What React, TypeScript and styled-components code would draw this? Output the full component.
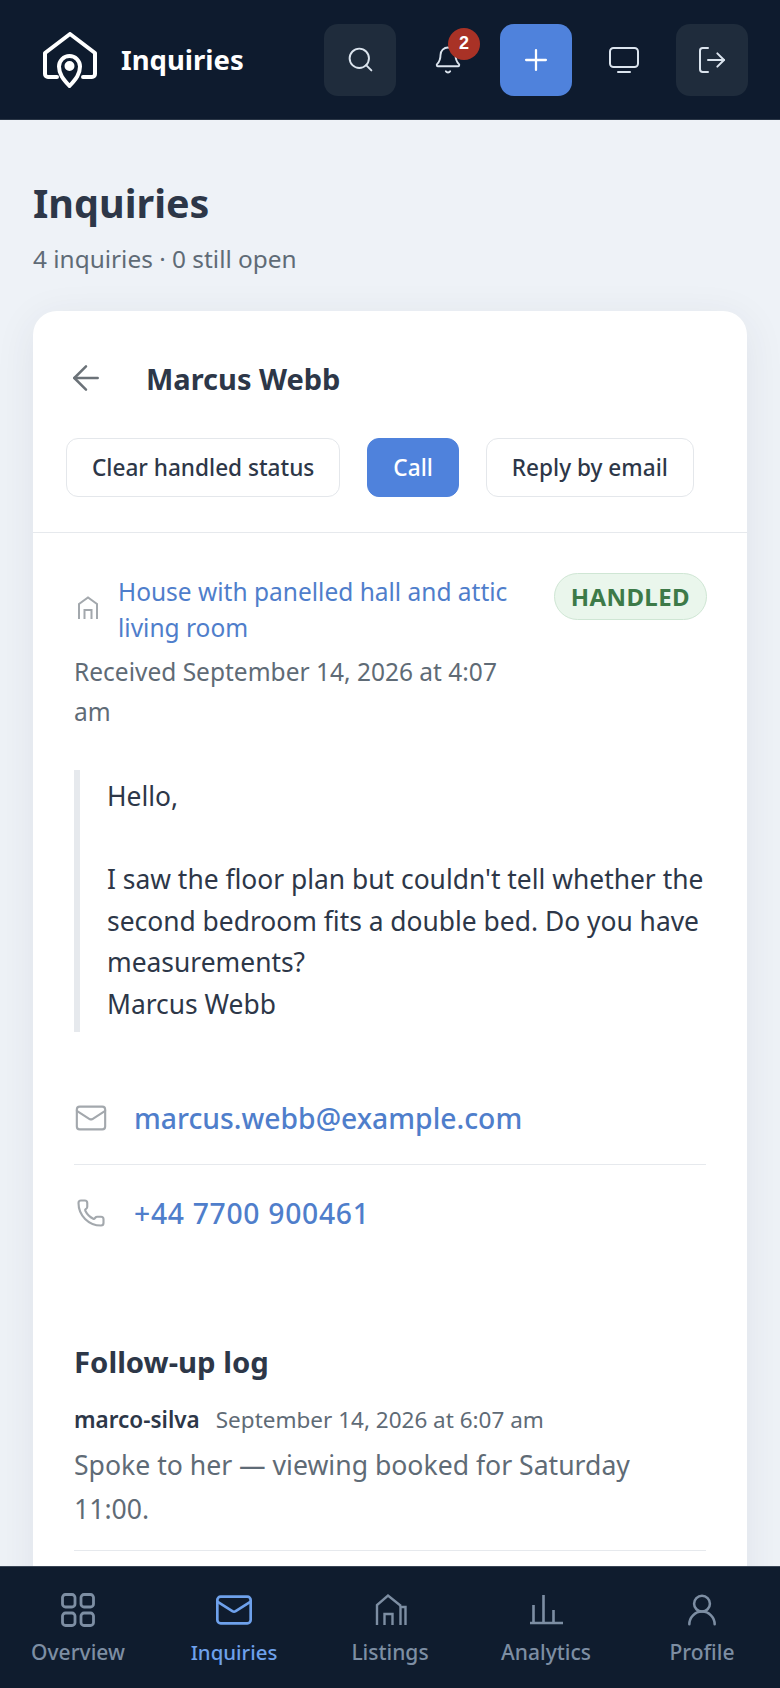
import React from "react";
import styled, { createGlobalStyle } from "styled-components";
import { ArrowLeft, Bell, LogOut, Mail, Phone, Plus, Search, UserRound } from "lucide-react";

const GlobalStyle = createGlobalStyle`
  * {
    box-sizing: border-box;
  }

  html,
  body {
    margin: 0;
    padding: 0;
    background: #eef2f7;
    font-family: "Noto Sans", "Open Sans", sans-serif;
  }
`;

const Screen = styled.div`
  display: flex;
  flex-direction: column;
  width: 780px;
  height: 1688px;
  overflow: hidden;
  background: #eef2f7;
`;

const Header = styled.header`
  display: flex;
  align-items: center;
  flex: 0 0 120px;
  padding: 0 32px 0 43px;
  background: #0e1b2e;
  border-bottom: 1px solid #2a3646;
`;

const Brand = styled.div`
  display: flex;
  align-items: center;
  gap: 24px;
  margin-right: auto;
  color: #ffffff;
  font-size: 27.5px;
  font-weight: 700;
`;

const Actions = styled.div`
  display: flex;
  gap: 16px;
`;

const IconButton = styled.button<{ $tone?: "muted" | "primary" | "plain" }>`
  position: relative;
  display: flex;
  align-items: center;
  justify-content: center;
  width: 72px;
  height: 72px;
  padding: 0;
  border: 0;
  border-radius: 14px;
  color: ${(props) => (props.$tone === "primary" ? "#ffffff" : "#dbe4ee")};
  background: ${(props) =>
    props.$tone === "primary" ? "#4f82dc" : props.$tone === "muted" ? "#1f2c3c" : "transparent"};
`;

const CountBadge = styled.span`
  position: absolute;
  top: 4px;
  right: 4px;
  display: flex;
  align-items: center;
  justify-content: center;
  width: 32px;
  height: 32px;
  border-radius: 50%;
  background: #a93226;
  color: #ffffff;
  font-size: 18px;
  font-weight: 700;
`;

const Main = styled.main`
  flex: 1;
  min-height: 0;
  overflow: hidden;
  padding: 56px 33px 0;
`;

const PageTitle = styled.h1`
  margin: 0;
  color: #2d3748;
  font-size: 39.5px;
  line-height: 54px;
  font-weight: 700;
`;

const PageSub = styled.p`
  margin: 12px 0 0;
  color: #5f6b76;
  font-size: 24.4px;
  line-height: 34px;
`;

const Card = styled.section`
  margin-top: 35px;
  background: #ffffff;
  border-radius: 24px;
  box-shadow: 0 8px 40px rgba(45, 55, 72, 0.08);
`;

const CardTop = styled.div`
  padding: 35px 33px 35px;
  border-bottom: 1px solid #e6e9ed;
`;

const TitleRow = styled.div`
  display: flex;
  align-items: center;
  gap: 40px;
  height: 64px;
  color: #6b7278;
`;

const Name = styled.h2`
  margin: 0;
  color: #2d3748;
  font-size: 29px;
  font-weight: 700;
`;

const ButtonRow = styled.div`
  display: flex;
  gap: 27px;
  margin-top: 28px;
`;

const ActionButton = styled.button<{ $primary?: boolean }>`
  height: 59px;
  padding: 0 25px;
  border: 1px solid ${(props) => (props.$primary ? "#4f82dc" : "#e4e7eb")};
  border-radius: 12px;
  background: ${(props) => (props.$primary ? "#4f82dc" : "#ffffff")};
  color: ${(props) => (props.$primary ? "#ffffff" : "#2d3748")};
  font-family: inherit;
  font-size: 22.6px;
  font-weight: 500;
  white-space: nowrap;
`;

const CardBody = styled.div`
  padding: 41px 41px 160px;
`;

const MetaRow = styled.div`
  display: flex;
  align-items: flex-start;
  justify-content: space-between;
`;

const MetaText = styled.div`
  width: 436px;
`;

const ListingLink = styled.a`
  display: flex;
  align-items: center;
  gap: 18px;
  color: #4f7ecb;
  font-size: 24.5px;
  line-height: 36px;
`;

const ListingIcon = styled.svg`
  flex: none;
  width: 26px;
  height: 26px;
  margin-top: -4px;
  color: #a3a8ad;
`;

const Received = styled.p`
  margin: 6px 0 0;
  color: #5f6b76;
  font-size: 24.5px;
  line-height: 40px;
`;

const StatusBadge = styled.span`
  display: flex;
  align-items: center;
  height: 47px;
  margin: -1px -1px 0 0;
  padding: 0 16px;
  border: 1px solid #cfe6d4;
  border-radius: 24px;
  background: #eaf6ec;
  color: #3d7a48;
  font-size: 24px;
  font-weight: 700;
  letter-spacing: 0.4px;
`;

const Message = styled.blockquote`
  margin: 38px 0 0;
  padding: 6px 0 6px 27px;
  border-left: 6px solid #e6e9ed;
  color: #2d3748;
  font-size: 26.4px;
  line-height: 41.6px;
`;

const ContactList = styled.div`
  margin-top: 40px;
`;

const ContactRow = styled.div<{ $last?: boolean }>`
  display: flex;
  align-items: center;
  gap: 26px;
  height: ${(props) => (props.$last ? "97px" : "93px")};
  color: #a3a8ad;
  border-bottom: ${(props) => (props.$last ? "0" : "1px solid #e6e9ed")};
`;

const ContactIcon = styled.span`
  display: flex;
  justify-content: center;
  flex: 0 0 34px;
`;

const ContactLink = styled.a<{ $digits?: boolean }>`
  color: #4f7ecb;
  font-size: 28.3px;
  font-weight: 500;
  letter-spacing: ${(props) => (props.$digits ? "0.7px" : "0")};
`;

const LogSection = styled.div`
  margin-top: 80px;
`;

const LogTitle = styled.h3`
  margin: 0;
  color: #2d3748;
  font-size: 29.3px;
  line-height: 40px;
  font-weight: 700;
`;

const LogEntry = styled.div`
  margin-top: 20px;
  padding-bottom: 19px;
  border-bottom: 1px solid #e6e9ed;
`;

const LogHead = styled.div`
  display: flex;
  align-items: baseline;
  gap: 16px;
  font-size: 22.5px;
  line-height: 36px;
`;

const LogAuthor = styled.span`
  color: #2d3748;
  font-weight: 600;
`;

const LogDate = styled.span`
  color: #5f6b76;
`;

const LogText = styled.p`
  margin: 5px 0 0;
  color: #5f6b76;
  font-size: 26.6px;
  line-height: 44px;
`;

const BottomNav = styled.nav`
  display: grid;
  grid-template-columns: repeat(5, 1fr);
  flex: 0 0 122px;
  background: #0f1c2e;
  border-top: 1px solid #3a4656;
`;

const NavItem = styled.a<{ $active?: boolean }>`
  display: flex;
  flex-direction: column;
  align-items: center;
  gap: 9px;
  padding-top: 25px;
  color: ${(props) => (props.$active ? "#6ea1ec" : "#7d8ea3")};
  font-size: ${(props) => (props.$active ? "20.4px" : "21px")};
  line-height: 30px;
  font-weight: 500;
`;

const NavIcon = styled.span`
  display: flex;
  align-items: center;
  justify-content: center;
  height: 36px;
`;

function LogoIcon() {
  return (
    <svg width="54" height="56" viewBox="0 0 54 56" fill="none" stroke="#fff" strokeWidth="4" strokeLinecap="round" strokeLinejoin="round">
      <path d="M14 45H5a3 3 0 0 1-3-3V21L27 2l25 19v21a3 3 0 0 1-3 3h-9" />
      <path d="M26.5 54c-6.500-7-10.500-12-10.500-19.500a10.500 10.500 0 0 1 21 0c0 7.500-4 12.500-10.500 19.500Z" />
      <circle cx="26.500" cy="34" r="3" fill="#fff" />
    </svg>
  );
}

function MonitorIcon() {
  return (
    <svg width="30" height="26" viewBox="0 0 30 26" fill="none" stroke="currentColor" strokeWidth="2" strokeLinecap="round" strokeLinejoin="round">
      <rect x="1" y="1" width="28" height="19" rx="3.5" />
      <path d="M9 25h12" />
    </svg>
  );
}

function HouseIcon() {
  return (
    <ListingIcon viewBox="0 0 26 26" fill="none" stroke="currentColor" strokeWidth="2">
      <path d="M5 24V9l9-6.500 9 6.500v15" />
      <path d="M10.500 24v-9h7v9" />
    </ListingIcon>
  );
}

function GridIcon() {
  return (
    <svg width="36" height="36" viewBox="0 0 36 36" fill="none" stroke="currentColor" strokeWidth="2.800">
      <rect x="2.500" y="2.500" width="12.500" height="12.500" rx="3" />
      <rect x="21" y="2.500" width="12.500" height="12.500" rx="3" />
      <rect x="2.500" y="21" width="12.500" height="12.500" rx="3" />
      <rect x="21" y="21" width="12.500" height="12.500" rx="3" />
    </svg>
  );
}

function ListingsIcon() {
  return (
    <svg width="36" height="36" viewBox="0 0 36 36" fill="none" stroke="currentColor" strokeWidth="2.400">
      <path d="M5 33V13L16 3.500 29 14" />
      <path d="M12.500 33V22h8v11" />
      <path d="M28.500 33V15h5v18" />
    </svg>
  );
}

function BarsIcon() {
  return (
    <svg width="36" height="36" viewBox="0 0 36 36" fill="none" stroke="currentColor" strokeWidth="2.600">
      <path d="M2 31h33" />
      <path d="M5.500 31V13M15.500 31V3M25.500 31V18" />
    </svg>
  );
}

function App() {
  return (
    <Screen>
      <GlobalStyle />
      <Header>
        <Brand>
          <LogoIcon />
          Inquiries
        </Brand>
        <Actions>
          <IconButton $tone="muted">
            <Search size={29} strokeWidth={1.6} />
          </IconButton>
          <IconButton $tone="plain">
            <Bell size={30} strokeWidth={1.5} />
            <CountBadge>2</CountBadge>
          </IconButton>
          <IconButton $tone="primary">
            <Plus size={34} strokeWidth={1.6} />
          </IconButton>
          <IconButton $tone="plain">
            <MonitorIcon />
          </IconButton>
          <IconButton $tone="muted">
            <LogOut size={32} strokeWidth={1.5} />
          </IconButton>
        </Actions>
      </Header>

      <Main>
        <PageTitle>Inquiries</PageTitle>
        <PageSub>4 inquiries · 0 still open</PageSub>

        <Card>
          <CardTop>
            <TitleRow>
              <ArrowLeft size={40} strokeWidth={1.5} />
              <Name>Marcus Webb</Name>
            </TitleRow>
            <ButtonRow>
              <ActionButton>Clear handled status</ActionButton>
              <ActionButton $primary>Call</ActionButton>
              <ActionButton>Reply by email</ActionButton>
            </ButtonRow>
          </CardTop>

          <CardBody>
            <MetaRow>
              <MetaText>
                <ListingLink>
                  <HouseIcon />
                  House with panelled hall and attic living room
                </ListingLink>
                <Received>Received September 14, 2026 at 4:07 am</Received>
              </MetaText>
              <StatusBadge>HANDLED</StatusBadge>
            </MetaRow>

            <Message>
              Hello,
              <br />
              <br />
              I saw the floor plan but couldn't tell whether the second bedroom fits a double bed. Do you have measurements?
              <br />
              Marcus Webb
            </Message>

            <ContactList>
              <ContactRow>
                <ContactIcon>
                  <Mail size={34} strokeWidth={1.5} />
                </ContactIcon>
                <ContactLink>marcus.webb@example.com</ContactLink>
              </ContactRow>
              <ContactRow $last>
                <ContactIcon>
                  <Phone size={30} strokeWidth={1.7} />
                </ContactIcon>
                <ContactLink $digits>+44 7700 900461</ContactLink>
              </ContactRow>
            </ContactList>

            <LogSection>
              <LogTitle>Follow-up log</LogTitle>
              <LogEntry>
                <LogHead>
                  <LogAuthor>marco-silva</LogAuthor>
                  <LogDate>September 14, 2026 at 6:07 am</LogDate>
                </LogHead>
                <LogText>Spoke to her — viewing booked for Saturday 11:00.</LogText>
              </LogEntry>
            </LogSection>
          </CardBody>
        </Card>
      </Main>

      <BottomNav>
        <NavItem>
          <NavIcon>
            <GridIcon />
          </NavIcon>
          Overview
        </NavItem>
        <NavItem $active>
          <NavIcon>
            <Mail size={40} strokeWidth={1.6} />
          </NavIcon>
          Inquiries
        </NavItem>
        <NavItem>
          <NavIcon>
            <ListingsIcon />
          </NavIcon>
          Listings
        </NavItem>
        <NavItem>
          <NavIcon>
            <BarsIcon />
          </NavIcon>
          Analytics
        </NavItem>
        <NavItem>
          <NavIcon>
            <UserRound size={38} strokeWidth={1.6} />
          </NavIcon>
          Profile
        </NavItem>
      </BottomNav>
    </Screen>
  );
}

export default App;
